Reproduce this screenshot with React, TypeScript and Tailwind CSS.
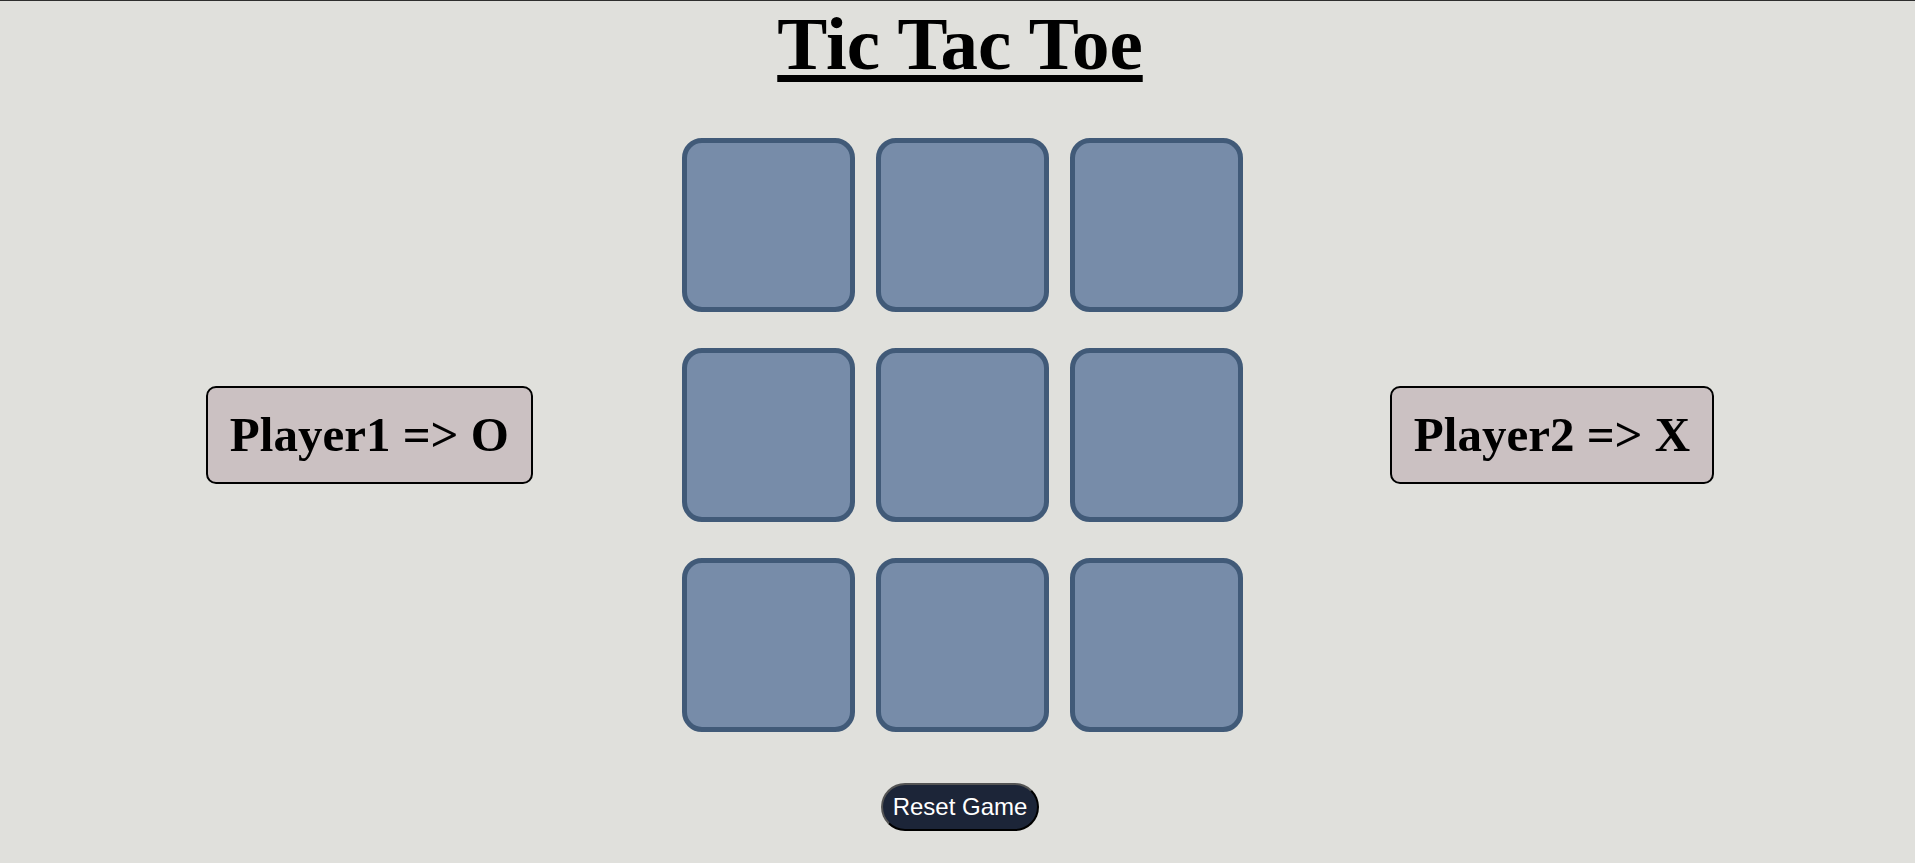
import { useState } from 'react';

type Cell = 'O' | 'X' | null;

const serif = "font-['Liberation_Serif','Times_New_Roman',serif]";

export default function App() {
    const [cells, setCells] = useState<Cell[]>(Array(9).fill(null));
    const [turnO, setTurnO] = useState<boolean>(true);

    const handleClick = (i: number): void => {
        if (cells[i]) return;
        const next = [...cells];
        next[i] = turnO ? 'O' : 'X';
        setCells(next);
        setTurnO(!turnO);
    };

    const handleReset = (): void => {
        setCells(Array(9).fill(null));
        setTurnO(true);
    };

    return (
        <div className="min-h-screen bg-[#e0e0dc] border-t border-[#2e2e2e] pl-[5px] flex flex-col items-center">
            <h1 className={`${serif} text-[75px] font-bold leading-[1.15] underline decoration-[7px] underline-offset-[6px] text-black`}>
                Tic Tac Toe
            </h1>

            {/* Board */}
            <div className="mt-[51px] flex items-center justify-center w-full">
                <div className={`${serif} mr-[149px] px-[22px] py-[19px] border-2 border-black rounded-[10px] bg-[#cbc1c2] text-[49px] font-bold leading-[1.15]`}>
                    Player1 =&gt; O
                </div>

                <div className="grid grid-cols-3 gap-x-[21px] gap-y-[36px]">
                    {cells.map((c, i) => (
                        <button
                            key={i}
                            onClick={() => handleClick(i)}
                            className={`${serif} w-[173px] h-[174px] bg-[#778ca9] border-[5px] border-[#415a78] rounded-[20px] text-[96px] font-bold text-[#1c2538]`}
                        >
                            {c}
                        </button>
                    ))}
                </div>

                <div className={`${serif} ml-[147px] px-[22px] py-[19px] border-2 border-black rounded-[10px] bg-[#cbc1c2] text-[49px] font-bold leading-[1.15]`}>
                    Player2 =&gt; X
                </div>
            </div>

            <button
                onClick={handleReset}
                className="mt-[51px] px-[10px] py-2 bg-[#1c2538] text-white text-[24px] leading-[1.15] font-['Liberation_Sans',Arial,sans-serif] rounded-full border-2 border-black [border-style:outset]"
            >
                Reset Game
            </button>
        </div>
    );
}
